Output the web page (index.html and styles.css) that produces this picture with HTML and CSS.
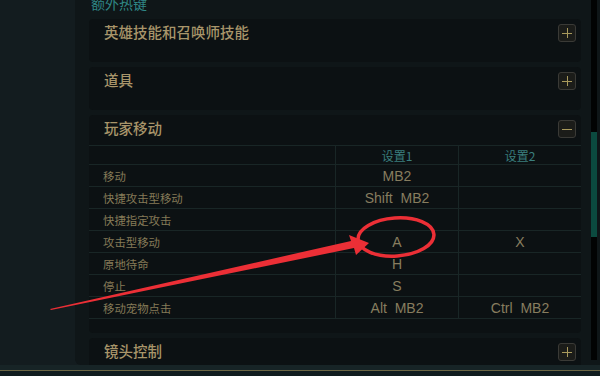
FILE: index.html
```html
<!DOCTYPE html>
<html lang="zh-CN">
<head>
<meta charset="utf-8">
<title>热键设置</title>
<link rel="stylesheet" href="styles.css">
</head>
<body>
<div class="screen">
  <div class="main">
    <div class="sidebar"></div>
    <div class="panel">
      <div class="content">
        <div class="heading">额外热键</div>
        <section class="card">
          <div class="card-head"><span class="card-title">英雄技能和召唤师技能</span><span class="toggle plus"></span></div>
        </section>
        <section class="card">
          <div class="card-head"><span class="card-title">道具</span><span class="toggle plus"></span></div>
        </section>
        <section class="card open">
          <div class="card-head"><span class="card-title">玩家移动</span><span class="toggle minus"></span></div>
          <div class="keys">
            <div class="row head-row"><div class="cell label"></div><div class="cell val">设置1</div><div class="cell val">设置2</div></div>
            <div class="row"><div class="cell label">移动</div><div class="cell val">MB2</div><div class="cell val"></div></div>
            <div class="row"><div class="cell label">快捷攻击型移动</div><div class="cell val">Shift&nbsp;&nbsp;MB2</div><div class="cell val"></div></div>
            <div class="row"><div class="cell label">快捷指定攻击</div><div class="cell val"></div><div class="cell val"></div></div>
            <div class="row"><div class="cell label">攻击型移动</div><div class="cell val">A</div><div class="cell val">X</div></div>
            <div class="row"><div class="cell label">原地待命</div><div class="cell val">H</div><div class="cell val"></div></div>
            <div class="row"><div class="cell label">停止</div><div class="cell val">S</div><div class="cell val"></div></div>
            <div class="row last"><div class="cell label">移动宠物点击</div><div class="cell val">Alt&nbsp;&nbsp;MB2</div><div class="cell val">Ctrl&nbsp;&nbsp;MB2</div></div>
          </div>
        </section>
        <section class="card">
          <div class="card-head"><span class="card-title">镜头控制</span><span class="toggle plus"></span></div>
        </section>
      </div>
      <div class="scrollbar"><div class="thumb"></div></div>
    </div>
  </div>
  <div class="footer"></div>
  <svg class="annot" width="600" height="376" viewBox="0 0 600 376">
    <polygon points="50,309 351,241 349,235 369,243 356,255 354,248 51,310" fill="#ec2f36"/>
    <ellipse cx="396" cy="237" rx="38" ry="19" transform="rotate(-4 396 237)" fill="none" stroke="#ec2f36" stroke-width="3.5"/>
  </svg>
</div>
</body>
</html>
```

FILE: styles.css
```css
* { box-sizing: border-box; }
html, body { margin: 0; padding: 0; }
body {
  width: 600px;
  height: 376px;
  overflow: hidden;
  background: #131c1f;
  font-family: "Noto Sans CJK SC", "Liberation Sans", sans-serif;
}
.screen {
  position: relative;
  width: 600px;
  height: 376px;
  display: flex;
  flex-direction: column;
}
.main {
  display: flex;
  height: 365px;
}
.sidebar {
  width: 75px;
  background: #131c1f;
}
.panel {
  flex: 1;
  display: flex;
  background: #0f1618;
  border-bottom-left-radius: 6px;
  overflow: hidden;
}
.content {
  width: 492px;
  margin-left: 14px;
  margin-top: -6px;
}
.heading {
  height: 18px;
  line-height: 18px;
  font-size: 14px;
  color: #2f8786;
  padding-left: 2px;
  margin-bottom: 7px;
}
.card {
  background: #0c1113;
  border-radius: 4px;
  margin-bottom: 5px;
  padding-bottom: 15px;
}
.card.open { padding-bottom: 14px; }
.card-head {
  height: 28px;
  display: flex;
  align-items: center;
  justify-content: space-between;
  padding: 0 5px 0 15px;
}
.open .card-head { margin-bottom: 2px; }
.card-title {
  font-size: 14.5px;
  font-weight: 500;
  line-height: 18px;
  padding-bottom: 3px;
  color: #a8956a;
}
.toggle {
  position: relative;
  width: 18px;
  height: 18px;
  border: 1px solid #3a3a36;
  border-radius: 3px;
  background: #1b1c19;
}
.toggle::before {
  content: "";
  position: absolute;
  left: 3px;
  top: 7.5px;
  width: 10px;
  height: 1px;
  background: #a99a5c;
}
.plus::after {
  content: "";
  position: absolute;
  left: 7.5px;
  top: 3px;
  width: 1px;
  height: 10px;
  background: #a99a5c;
}
.keys { width: 100%; }
.row {
  display: grid;
  grid-template-columns: 246px 123px 123px;
  height: 22px;
  border-top: 1px solid #192626;
}
.row.head-row { height: 19px; }
.row.last { height: 23px; border-bottom: 1px solid #192626; }
.cell {
  display: flex;
  align-items: center;
  white-space: pre;
}
.cell.label {
  padding-left: 14px;
  font-size: 11.4px;
  color: #857a57;
}
.cell.val {
  justify-content: center;
  border-left: 1px solid #192626;
  font-family: "Liberation Sans", "Noto Sans CJK SC", sans-serif;
  font-size: 14px;
  color: #877d5f;
}
.head-row .cell.val {
  font-family: "Noto Sans CJK SC", "Liberation Sans", sans-serif;
  font-size: 12px;
  color: #3a7f7e;
}
.scrollbar {
  width: 6px;
  height: 360px;
  margin-left: 10px;
  background: #020303;
  display: flex;
  flex-direction: column;
}
.thumb {
  margin-top: 132px;
  height: 105px;
  background: #0b4a3f;
}
.footer {
  height: 11px;
  background: linear-gradient(#172426 0 5px, #6c6644 5px 6px, #101c1f 6px);
}
.annot {
  position: absolute;
  left: 0;
  top: 0;
  pointer-events: none;
}
```
